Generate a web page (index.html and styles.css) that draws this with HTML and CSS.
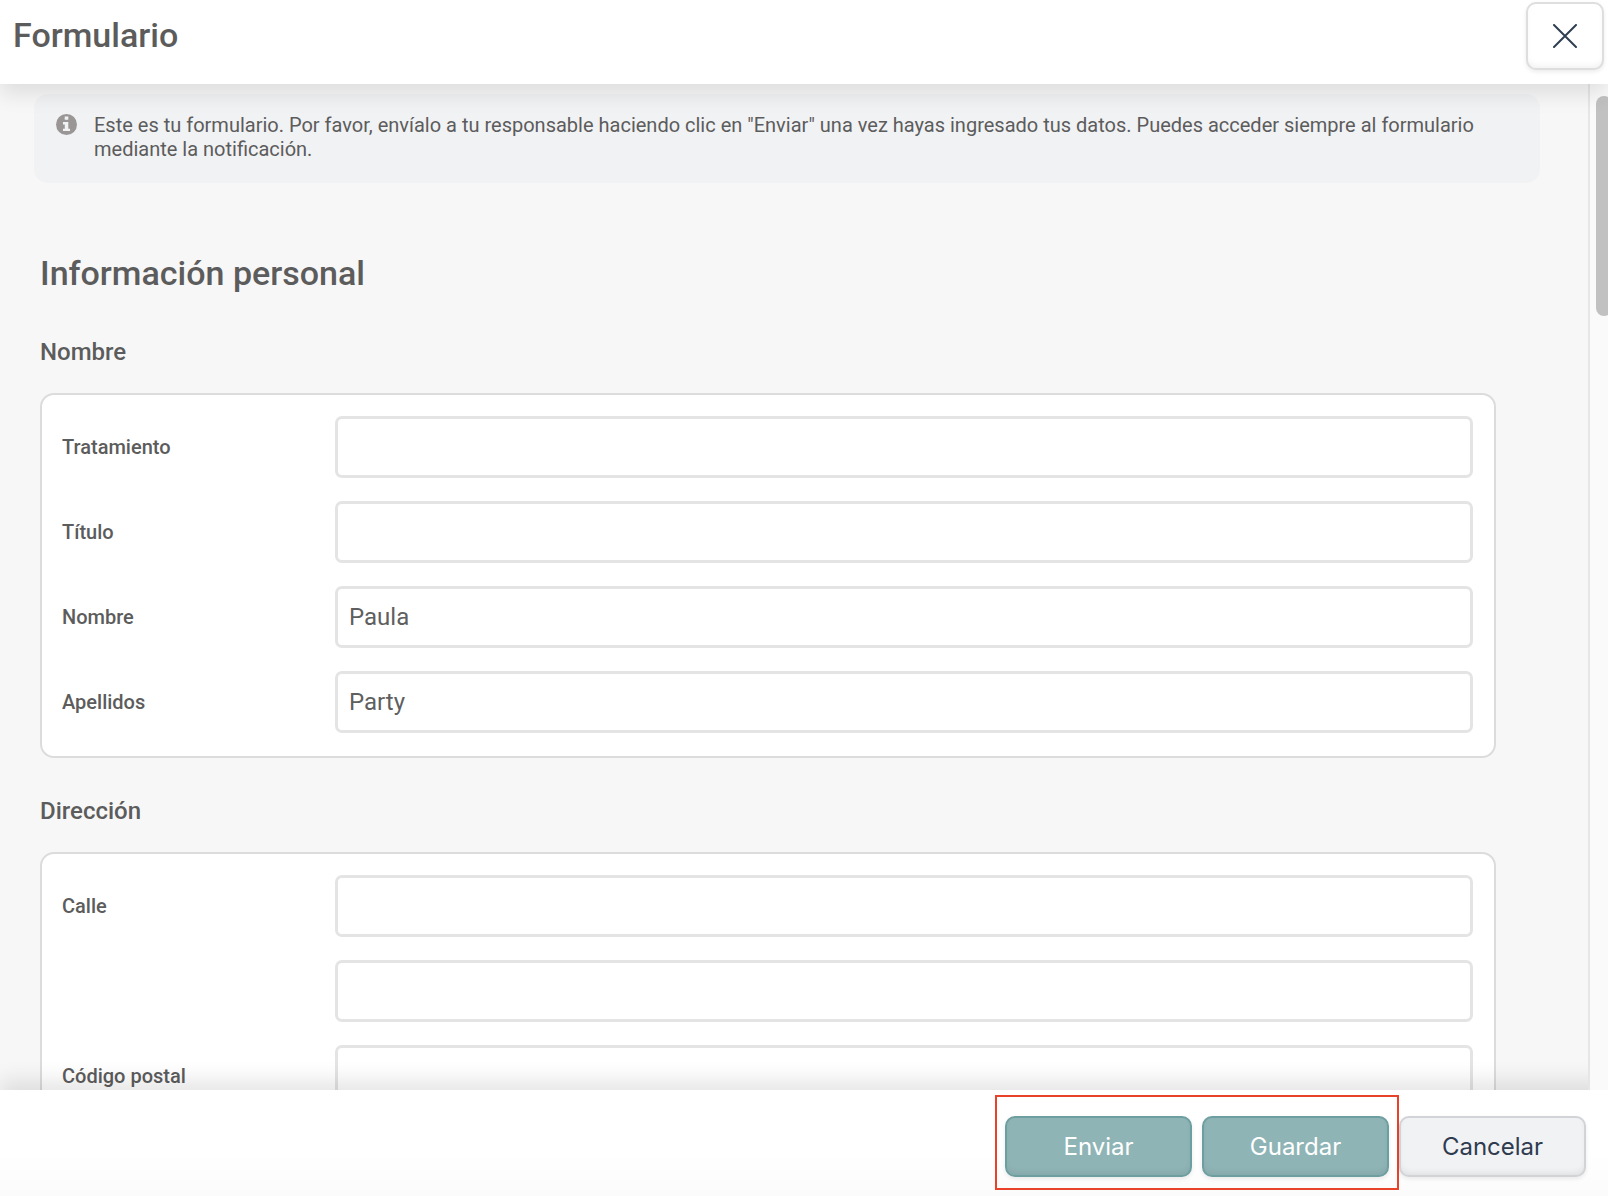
FILE: index.html
```html
<!DOCTYPE html>
<html lang="es">

<head>
    <meta charset="UTF-8">
    <meta name="viewport" content="width=device-width, initial-scale=1.0">
    <title>Formulario</title>
    <link rel="stylesheet" href="styles.css">
</head>

<body>
    <div class="dialog">
        <header class="header">
            <h1 class="title">Formulario</h1>
            <button type="button" class="close" aria-label="Cerrar">
                <svg width="24" height="24" viewBox="0 0 24 24">
                    <path d="M1 1l22 22M23 1l-22 22" fill="none" stroke="#2f3e50" stroke-width="2" stroke-linecap="round"/>
                </svg>
            </button>
        </header>

        <div class="body">
            <main class="content">
                <div class="notice">
                    <svg class="notice-icon" width="21" height="21" viewBox="0 0 21 21">
                        <circle cx="10.5" cy="10.5" r="10.5" fill="#9b9696"/>
                        <path d="M8.7 2.6h3.6v3.2H8.7zM7 8h5.3v6.7H14v2.4H7v-2.4h1.8v-4.3H7z" fill="#f1f2f4"/>
                    </svg>
                    <p class="notice-text">Este es tu formulario. Por favor, envíalo a tu responsable haciendo clic en "Enviar" una vez hayas ingresado tus datos. Puedes acceder siempre al formulario mediante la notificación.</p>
                </div>

                <form class="form" id="form">
                    <h2 class="section">Información personal</h2>

                    <h3 class="group">Nombre</h3>
                    <div class="card">
                        <label class="label" for="tratamiento">Tratamiento</label>
                        <input class="field" type="text" id="tratamiento">
                        <label class="label" for="titulo">Título</label>
                        <input class="field" type="text" id="titulo">
                        <label class="label" for="nombre">Nombre</label>
                        <input class="field" type="text" id="nombre" value="Paula">
                        <label class="label" for="apellidos">Apellidos</label>
                        <input class="field" type="text" id="apellidos" value="Party">
                    </div>

                    <h3 class="group">Dirección</h3>
                    <div class="card">
                        <label class="label" for="calle">Calle</label>
                        <input class="field" type="text" id="calle">
                        <label class="label" for="calle2"></label>
                        <input class="field" type="text" id="calle2" aria-label="Calle 2">
                        <label class="label" for="cp">Código postal</label>
                        <input class="field" type="text" id="cp">
                    </div>
                </form>
            </main>
            <div class="scrollbar">
                <div class="thumb"></div>
            </div>
        </div>

        <footer class="footer">
            <div class="highlight">
                <button type="submit" form="form" class="btn primary">Enviar</button>
                <button type="button" class="btn primary">Guardar</button>
            </div>
            <button type="button" class="btn cancel">Cancelar</button>
        </footer>
    </div>
</body>

</html>
```

FILE: styles.css
```css
* {
    margin: 0;
    padding: 0;
    box-sizing: border-box;
}

body {
    font-family: Roboto, "Liberation Sans", sans-serif;
    color: #5c5c5c;
    background-color: #f7f7f7;
}

.dialog {
    display: flex;
    flex-direction: column;
    height: 100vh;
    overflow: hidden;
}

.header {
    display: flex;
    justify-content: space-between;
    align-items: flex-start;
    padding: 2px 4px 14px 13px;
    background-color: #fff;
    box-shadow: 0 10px 20px rgba(0, 0, 0, 0.1);
    z-index: 3;
}

.title {
    font-size: 34px;
    font-weight: 500;
    line-height: 66px;
}

.close {
    display: flex;
    justify-content: center;
    align-items: center;
    width: 78px;
    height: 68px;
    border: 2px solid #dedede;
    border-radius: 10px;
    background-color: #fff;
    box-shadow: 0 2px 4px rgba(0, 0, 0, 0.08), inset 0 -4px 6px -2px rgba(0, 0, 0, 0.06);
}

.body {
    display: flex;
    flex: 1;
    min-height: 0;
}

.content {
    flex: 1;
    overflow: hidden;
    padding: 10px 48px 0 34px;
}

.notice {
    display: flex;
    gap: 17px;
    padding: 19px 32px 22px 22px;
    border-radius: 14px;
    background-color: #f1f2f4;
}

.notice-icon {
    flex: none;
    margin-top: 1px;
}

.notice-text {
    font-size: 20px;
    line-height: 24px;
}

.form {
    padding: 70px 44px 0 6px;
}

.section {
    font-size: 34px;
    font-weight: 500;
    line-height: 40px;
}

.group {
    margin: 37px 0 25px;
    font-size: 24px;
    font-weight: 500;
    line-height: 32px;
}

.section + .group {
    margin-top: 43px;
}

.card {
    display: grid;
    grid-template-columns: 250px 1fr;
    column-gap: 23px;
    row-gap: 23px;
    align-items: center;
    padding: 21px 21px 23px 20px;
    border: 2px solid #dcdcdc;
    border-radius: 14px;
    background-color: #fff;
}

.label {
    font-size: 20px;
    font-weight: 500;
}

.field {
    width: 100%;
    height: 62px;
    padding: 0 11px;
    border: 3px solid #e4e4e4;
    border-radius: 7px;
    font-family: inherit;
    font-size: 24px;
    color: #5f5f5f;
    background-color: #fff;
}

.scrollbar {
    width: 20px;
    padding: 12px 0 0 6px;
    border-left: 2px solid #e6e6e6;
    background-color: #fafafa;
    overflow: hidden;
    z-index: 2;
}

.thumb {
    width: 16px;
    height: 220px;
    border-radius: 8px;
    background-color: #c1c1c1;
}

.footer {
    display: flex;
    justify-content: flex-end;
    align-items: flex-end;
    padding: 5px 22px 6px;
    background: linear-gradient(#fff 60%, #fbfbfb);
    box-shadow: 0 -10px 20px rgba(0, 0, 0, 0.1);
    z-index: 1;
}

.highlight {
    display: flex;
    gap: 10px;
    padding: 19px 8px 11px;
    border: 2px solid #e8432a;
}

.btn {
    width: 187px;
    height: 61px;
    border: 2px solid #6e9fa0;
    border-radius: 10px;
    font-family: Inter, "Liberation Sans", sans-serif;
    font-size: 24px;
    box-shadow: 0 2px 4px rgba(0, 0, 0, 0.08), inset 0 -4px 6px -2px rgba(0, 0, 0, 0.08);
}

.primary {
    color: #fff;
    background-color: #8fb4b6;
}

.cancel {
    margin-bottom: 13px;
    border-color: #d2d3d7;
    color: #2f3b4f;
    background-color: #f1f2f4;
}
```
